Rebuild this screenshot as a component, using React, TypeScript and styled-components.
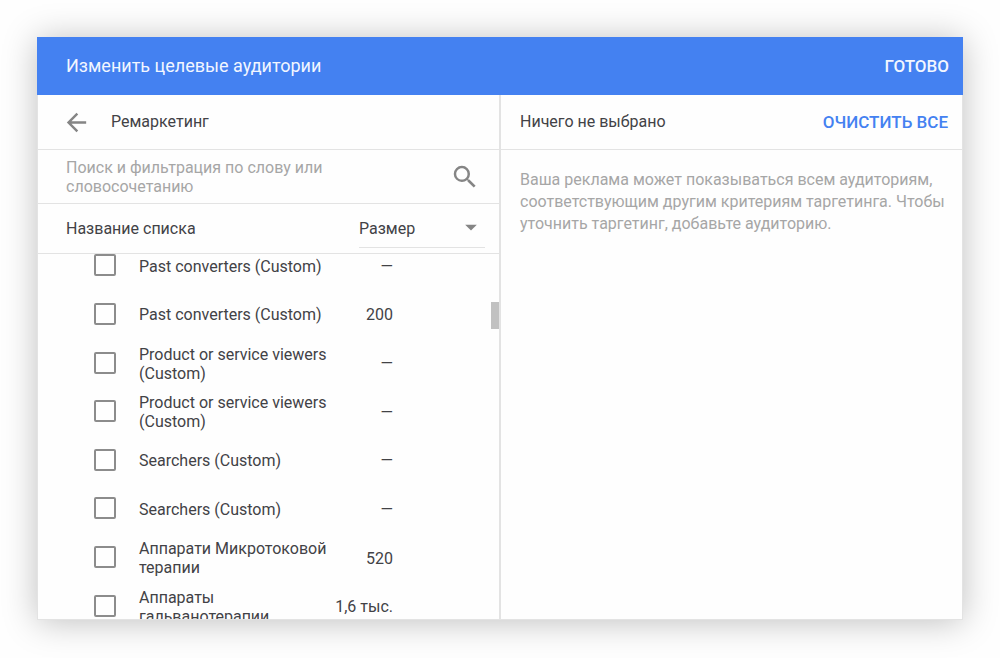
import React from "react";
import styled, { createGlobalStyle } from "styled-components";
import { MdArrowBack, MdArrowDropDown, MdSearch } from "react-icons/md";

const line = "#e3e3e3";
const blue = "#4481f1";
const ink = "#424246";
const muted = "#a6a6a6";
const icon = "#858585";

const GlobalStyle = createGlobalStyle`
  *, *::before, *::after { box-sizing: border-box; }
  body { margin: 0; background: #fefefe; }
  body, button, select, textarea {
    font-family: Roboto, "Liberation Sans", sans-serif;
    font-size: 16px;
    line-height: 19px;
    color: ${ink};
  }
`;

const Stage = styled.main`
  display: flex;
  height: 100vh;
  padding: 37px 37px 38px;
`;

const Dialog = styled.section`
  flex: 1;
  min-width: 0;
  display: flex;
  flex-direction: column;
  background: #fefefe;
  box-shadow: 0 2px 32px rgba(0, 0, 0, 0.25);
`;

const Header = styled.header`
  display: flex;
  align-items: center;
  justify-content: space-between;
  flex: none;
  height: 58px;
  padding: 0 14px 0 29px;
  background: ${blue};
`;

const Title = styled.h1`
  margin: 0;
  font-size: 18px;
  line-height: 24px;
  font-weight: 400;
  color: #f2f6ff;
`;

const TextButton = styled.button<{ $color: string }>`
  padding: 0;
  border: 0;
  background: none;
  font-size: 17px;
  line-height: 24px;
  font-weight: 500;
  text-transform: uppercase;
  color: ${({ $color }) => $color};
  cursor: pointer;
`;

const Columns = styled.div`
  flex: 1;
  min-height: 0;
  display: flex;
  border: 1px solid ${line};
  border-top: 0;
`;

const Panel = styled.div`
  flex: 1;
  min-width: 0;
  display: flex;
  flex-direction: column;

  & + & {
    border-left: 2px solid ${line};
  }
`;

const PanelBar = styled.div<{ $inset: number }>`
  display: flex;
  align-items: center;
  flex: none;
  height: 55px;
  padding: 0 14px 0 ${({ $inset }) => $inset}px;
  border-bottom: 1px solid ${line};
`;

const BarTitle = styled.h2`
  margin: 0;
  flex: 1;
  font-size: 16px;
  line-height: 20px;
  font-weight: 400;
`;

const IconButton = styled.button`
  display: flex;
  padding: 0;
  border: 0;
  background: none;
  color: ${icon};
  cursor: pointer;
`;

const BackButton = styled(IconButton)`
  margin-right: 20px;
`;

const SearchBar = styled.form`
  display: flex;
  align-items: center;
  justify-content: space-between;
  flex: none;
  height: 54px;
  padding: 0 19px 0 28px;
  border-bottom: 1px solid ${line};
`;

const SearchField = styled.textarea`
  width: 280px;
  height: 38px;
  padding: 0;
  border: 0;
  outline: 0;
  resize: none;
  overflow: hidden;
  background: none;

  &::placeholder {
    color: ${muted};
    opacity: 1;
  }
`;

const ListHead = styled.div`
  display: flex;
  align-items: flex-end;
  justify-content: space-between;
  flex: none;
  height: 50px;
  padding: 0 14px 5px 28px;
  border-bottom: 1px solid ${line};
`;

const ListName = styled.span`
  padding-bottom: 10px;
`;

const SortBox = styled.div`
  position: relative;
  width: 126px;
  border-bottom: 1px solid ${line};

  svg {
    position: absolute;
    right: 0;
    top: 3px;
    color: ${icon};
    pointer-events: none;
  }
`;

const SortSelect = styled.select`
  appearance: none;
  display: block;
  width: 100%;
  height: 37px;
  padding: 0 28px 0 0;
  border: 0;
  background: none;
  cursor: pointer;
`;

const ListArea = styled.div`
  position: relative;
  flex: 1;
  min-height: 0;
  overflow: hidden;
`;

const ScrollThumb = styled.div`
  position: absolute;
  top: 48px;
  right: 0;
  width: 8px;
  height: 27px;
  background: #c1c1c1;
`;

const Table = styled.table`
  width: 100%;
  height: 389px;
  margin-top: -12px;
  border-collapse: collapse;
  table-layout: fixed;

  tr {
    height: 48px;
  }
`;

const CheckCell = styled.td`
  width: 101px;
  padding: 0 0 2px 56px;
`;

const NameCell = styled.td`
  padding: 0;
`;

const SizeCell = styled.td`
  width: 170px;
  padding: 0 106px 0 0;
  text-align: right;
  white-space: nowrap;
`;

const Checkbox = styled.input`
  appearance: none;
  display: block;
  width: 22px;
  height: 22px;
  margin: 0;
  border: 2px solid #8c8c8c;
  border-radius: 2px;

  &:checked {
    background: ${blue};
    border-color: ${blue};
  }
`;

const Hint = styled.p`
  margin: 0;
  padding: 19px 16px 0 19px;
  line-height: 22px;
  color: ${muted};
`;

const audiences = [
  { name: "Past converters (Custom)", size: "—" },
  { name: "Past converters (Custom)", size: "200" },
  { name: "Product or service viewers (Custom)", size: "—" },
  { name: "Product or service viewers (Custom)", size: "—" },
  { name: "Searchers (Custom)", size: "—" },
  { name: "Searchers (Custom)", size: "—" },
  { name: "Аппарати Микротоковой терапии", size: "520" },
  { name: "Аппараты гальванотерапии", size: "1,6 тыс." },
];

export default function App() {
  return (
    <>
      <GlobalStyle />
      <Stage>
        <Dialog>
          <Header>
            <Title>Изменить целевые аудитории</Title>
            <TextButton type="button" $color="#f2f6ff">Готово</TextButton>
          </Header>
          <Columns>
            <Panel>
              <PanelBar $inset={24}>
                <BackButton type="button" aria-label="Назад">
                  <MdArrowBack size={29} />
                </BackButton>
                <BarTitle>Ремаркетинг</BarTitle>
              </PanelBar>
              <SearchBar>
                <SearchField
                  rows={2}
                  aria-label="Поиск"
                  placeholder="Поиск и фильтрация по слову или словосочетанию"
                />
                <IconButton type="button" aria-label="Найти">
                  <MdSearch size={30} />
                </IconButton>
              </SearchBar>
              <ListHead>
                <ListName>Название списка</ListName>
                <SortBox>
                  <SortSelect aria-label="Столбец">
                    <option>Размер</option>
                  </SortSelect>
                  <MdArrowDropDown size={28} />
                </SortBox>
              </ListHead>
              <ListArea>
                <Table>
                  <tbody>
                    {audiences.map((item, i) => (
                      <tr key={i}>
                        <CheckCell>
                          <Checkbox type="checkbox" id={`audience-${i}`} />
                        </CheckCell>
                        <NameCell>
                          <label htmlFor={`audience-${i}`}>{item.name}</label>
                        </NameCell>
                        <SizeCell>{item.size}</SizeCell>
                      </tr>
                    ))}
                  </tbody>
                </Table>
                <ScrollThumb />
              </ListArea>
            </Panel>
            <Panel>
              <PanelBar $inset={19}>
                <BarTitle>Ничего не выбрано</BarTitle>
                <TextButton type="button" $color={blue}>Очистить все</TextButton>
              </PanelBar>
              <Hint>
                Ваша реклама может показываться всем аудиториям, соответствующим
                другим критериям таргетинга. Чтобы уточнить таргетинг, добавьте
                аудиторию.
              </Hint>
            </Panel>
          </Columns>
        </Dialog>
      </Stage>
    </>
  );
}
